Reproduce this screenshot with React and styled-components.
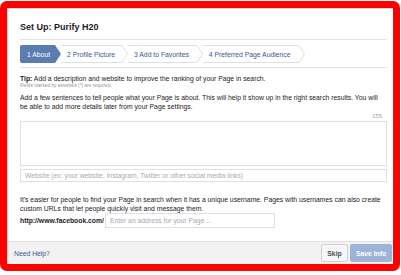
import React from 'react';
import styled, { createGlobalStyle } from 'styled-components';

const GlobalStyle = createGlobalStyle`
  html, body {
    margin: 0;
    padding: 0;
    background: #ffffff;
  }
  body {
    font-family: 'Liberation Sans', Arial, sans-serif;
    color: #1d2129;
  }
`;

const Frame = styled.div`
  margin-top: 1px;
  width: 400px;
  height: 270px;
  box-sizing: border-box;
  border: 7px solid #ff0000;
  border-radius: 7px;
  overflow: hidden;
`;

const Dialog = styled.div`
  height: 100%;
  box-sizing: border-box;
  border: 1px solid #d6d8dc;
  border-right: none;
  border-bottom: none;
  background: #ffffff;
  display: flex;
  flex-direction: column;
`;

const Body = styled.div`
  flex: 1;
  padding: 0 6px 0 12px;
`;

const Header = styled.div`
  padding: 13px 0 6px;
  border-bottom: 1px solid #e5e5e5;
`;

const Title = styled.h1`
  margin: 0;
  font-size: 9px;
  line-height: 11px;
  font-weight: bold;
  color: #1d2129;
`;

const StepsBar = styled.div`
  padding: 5px 0 4px;
  border-bottom: 1px solid #e5e5e5;
`;

const StepsRow = styled.div`
  display: flex;
  height: 18px;
`;

const Step = styled.div`
  display: flex;
  align-items: center;
  height: 18px;
  box-sizing: border-box;
  padding: 0 ${p => p.$pad}px 0 ${p => p.$left}px;
  font-size: 6.8px;
  color: ${p => (p.$active ? '#ffffff' : '#365899')};
  background: ${p => (p.$active ? '#5b7bb1' : '#ffffff')};
  border-top: ${p => (p.$active ? 'none' : '1px solid #dddfe2')};
  border-bottom: ${p => (p.$active ? 'none' : '1px solid #dddfe2')};
  border-radius: ${p => (p.$first ? '2px 0 0 2px' : '0')};
  white-space: nowrap;
`;

const StepGroup = styled.div`
  display: flex;
`;

const Chevron = ({ active }) => (
  <svg width="6" height="18" viewBox="0 0 6 18" style={{ display: 'block' }}>
    <polygon points="0,0 6,9 0,18" fill={active ? '#5b7bb1' : '#ffffff'} />
    {!active && <polyline points="0,0.5 5.5,9 0,17.5" fill="none" stroke="#dddfe2" strokeWidth="1" />}
  </svg>
);

const Tip = styled.p`
  margin: 6px 0 0;
  font-size: 6.8px;
  line-height: 9px;
  b {
    font-weight: bold;
  }
`;

const Note = styled.p`
  margin: 0;
  font-size: 4.8px;
  line-height: 6px;
  color: #90949c;
`;

const Text = styled.p`
  margin: ${p => p.$top}px 0 0;
  font-size: 6.8px;
  line-height: 9px;
  color: #1d2129;
  white-space: nowrap;
`;

const Counter = styled.div`
  margin-top: 1px;
  text-align: right;
  padding-right: 5px;
  font-size: 6px;
  line-height: 9px;
  color: #a0a3a9;
`;

const TextArea = styled.div`
  height: 45px;
  box-sizing: border-box;
  border: 1px solid #dddfe2;
  background: #ffffff;
`;

const Input = styled.div`
  margin-top: ${p => p.$top || 0}px;
  width: ${p => (p.$width ? `${p.$width}px` : 'auto')};
  height: ${p => p.$height}px;
  box-sizing: border-box;
  border: 1px solid #dddfe2;
  background: #ffffff;
  display: flex;
  align-items: center;
  padding-left: 4px;
  font-size: 6.8px;
  color: #a7aab0;
  white-space: nowrap;
  overflow: hidden;
`;

const UrlRow = styled.div`
  display: flex;
  align-items: center;
  gap: 1px;
`;

const UrlLabel = styled.span`
  font-size: 6.8px;
  font-weight: bold;
  color: #1d2129;
`;

const Footer = styled.div`
  height: 23px;
  box-sizing: border-box;
  border-top: 1px solid #e0e0e0;
  background: #f2f2f2;
  display: flex;
  align-items: center;
  padding: 0 1px 0 6px;
`;

const HelpLink = styled.a`
  font-size: 6.8px;
  color: #365899;
  text-decoration: none;
`;

const Buttons = styled.div`
  margin-left: auto;
  display: flex;
  gap: 2px;
`;

const Button = styled.button`
  height: 18px;
  width: ${p => p.$width}px;
  box-sizing: border-box;
  padding: 0;
  font-family: 'Liberation Sans', Arial, sans-serif;
  font-size: 6.8px;
  font-weight: bold;
  border-radius: 2px;
  border: 1px solid ${p => (p.$primary ? '#9cb4d8' : '#ced0d4')};
  background: ${p => (p.$primary ? '#9cb4d8' : '#f6f7f9')};
  color: ${p => (p.$primary ? '#ffffff' : '#4b4f56')};
`;

const steps = [
  { label: '1 About', left: 7, pad: 5 },
  { label: '2 Profile Picture', left: 6, pad: 7 },
  { label: '3 Add to Favorites', left: 6, pad: 8 },
  { label: '4 Preferred Page Audience', left: 6, pad: 9 },
];

const App = () => (
  <>
    <GlobalStyle />
    <Frame>
      <Dialog>
        <Body>
          <Header>
            <Title>Set Up: Purify H20</Title>
          </Header>
          <StepsBar>
            <StepsRow>
              {steps.map((s, i) => (
                <StepGroup key={s.label}>
                  <Step $active={i === 0} $first={i === 0} $left={s.left} $pad={s.pad}>
                    {s.label}
                  </Step>
                  <Chevron active={i === 0} />
                </StepGroup>
              ))}
            </StepsRow>
          </StepsBar>
          <Tip>
            <b>Tip:</b> Add a description and website to improve the ranking of your Page in search.
          </Tip>
          <Note>Fields marked by asterisks (*) are required.</Note>
          <Text $top={4}>
            Add a few sentences to tell people what your Page is about. This will help it show up in the right search results. You will
            <br />
            be able to add more details later from your Page settings.
          </Text>
          <Counter>155</Counter>
          <TextArea />
          <Input $top={3} $height={13}>
            Website (ex: your website, Instagram, Twitter or other social media links)
          </Input>
          <Text $top={13}>
            It's easier for people to find your Page in search when it has a unique username. Pages with usernames can also create
            <br />
            custom URLs that let people quickly visit and message them.
          </Text>
          <UrlRow>
            <UrlLabel>http://www.facebook.com/</UrlLabel>
            <Input $height={15} $width={170}>
              Enter an address for your Page ...
            </Input>
          </UrlRow>
        </Body>
        <Footer>
          <HelpLink href="#">Need Help?</HelpLink>
          <Buttons>
            <Button $width={27}>Skip</Button>
            <Button $primary $width={42}>Save Info</Button>
          </Buttons>
        </Footer>
      </Dialog>
    </Frame>
  </>
);

export default App;
